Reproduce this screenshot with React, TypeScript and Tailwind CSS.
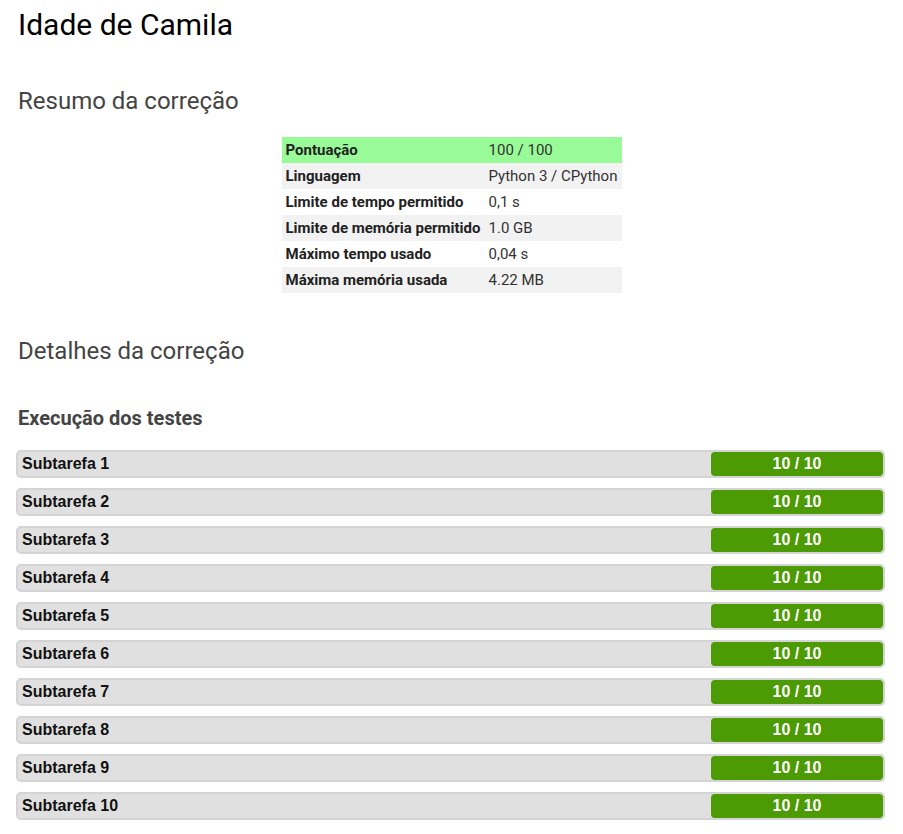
import React from "react";

const resumo = [
  { label: "Pontuação", value: "100 / 100", bg: "bg-[#98fb98]" },
  { label: "Linguagem", value: "Python 3 / CPython", bg: "bg-[#f2f2f2]" },
  { label: "Limite de tempo permitido", value: "0,1 s", bg: "bg-white" },
  { label: "Limite de memória permitido", value: "1.0 GB", bg: "bg-[#f2f2f2]" },
  { label: "Máximo tempo usado", value: "0,04 s", bg: "bg-white" },
  { label: "Máxima memória usada", value: "4.22 MB", bg: "bg-[#f2f2f2]" },
];

const subtarefas = Array.from({ length: 10 }, (_, i) => i + 1);

const App = () => {
  return (
    <div className="min-h-screen bg-white px-[18px] pt-[7px] font-['Roboto',sans-serif]">
      <h1 className="text-[30px] leading-[36px] text-black">Idade de Camila</h1>

      <h2 className="mt-[44px] text-[24px] leading-[1.2] text-[#444]">
        Resumo da correção
      </h2>
      <table className="mx-auto mt-[21px] w-[340px] border-collapse text-[15px]">
        <tbody>
          {resumo.map((r) => (
            <tr key={r.label} className={`h-[26px] ${r.bg}`}>
              <td className="px-[4px] font-bold text-[#222]">{r.label}</td>
              <td className="px-[4px] text-[#333]">{r.value}</td>
            </tr>
          ))}
        </tbody>
      </table>

      <h2 className="mt-[44px] text-[24px] leading-[1.2] text-[#444]">
        Detalhes da correção
      </h2>
      <h3 className="mt-[40px] text-[20px] font-bold leading-[24px] text-[#444]">
        Execução dos testes
      </h3>

      <div className="mt-[20px] ml-[-2px] flex flex-col gap-[10px] font-['Liberation_Sans',Arial,sans-serif]">
        {subtarefas.map((n) => (
          <div
            key={n}
            className="flex h-[28px] items-center justify-between rounded-[5px] border-2 border-[#d4d4d4] bg-[#e0e0e0]"
          >
            <span className="pl-[4px] text-[16px] font-bold text-[#111]">Subtarefa {n}</span>
            <span className="flex h-full w-[172px] items-center justify-center rounded-[4px] bg-[#4c9a04] text-[16px] font-bold text-white">
              10 / 10
            </span>
          </div>
        ))}
      </div>
    </div>
  );
};

export default App;
